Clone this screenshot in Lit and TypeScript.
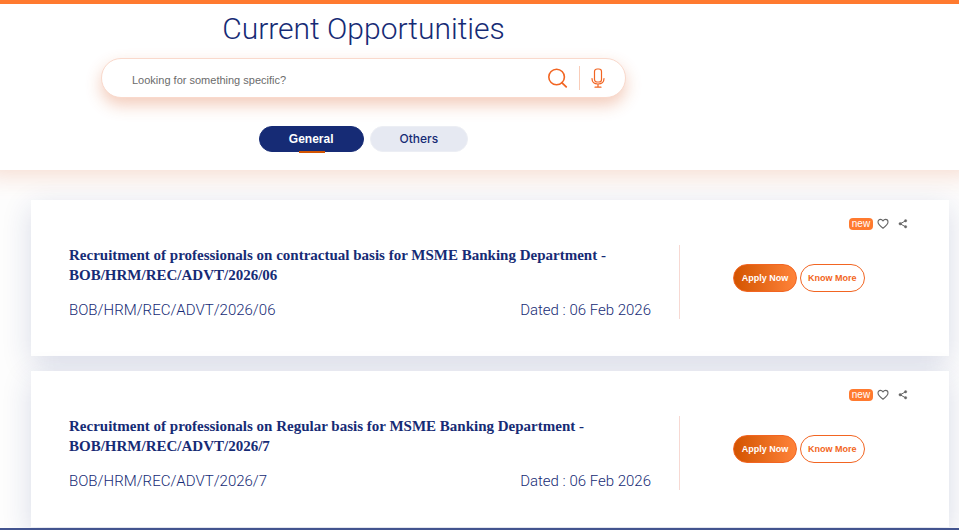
import { LitElement, html, css } from "lit";
import { customElement, property, state } from "lit/decorators.js";
import { classMap } from "lit/directives/class-map.js";

interface Opening {
  title: string;
  ref: string;
  dated: string;
}

const OPENINGS: Opening[] = [
  {
    title: "Recruitment of professionals on contractual basis for MSME Banking Department - BOB/HRM/REC/ADVT/2026/06",
    ref: "BOB/HRM/REC/ADVT/2026/06",
    dated: "06 Feb 2026",
  },
  {
    title: "Recruitment of professionals on Regular basis for MSME Banking Department - BOB/HRM/REC/ADVT/2026/7",
    ref: "BOB/HRM/REC/ADVT/2026/7",
    dated: "06 Feb 2026",
  },
];

@customElement("opening-card")
export class OpeningCard extends LitElement {
  @property({ attribute: false }) opening!: Opening;

  static styles = css`
    :host {
      display: block;
      background: #fff;
      box-shadow: 0 8px 28px rgba(22, 43, 117, 0.16);
      font-family: "Liberation Sans", Arial, sans-serif;
      color: #162b75;
    }
    .tools {
      display: flex;
      justify-content: flex-end;
      align-items: center;
      height: 12px;
      padding: 18px 41px 15px 0;
    }
    .badge {
      width: 24px;
      height: 12px;
      margin-right: 4px;
      border-radius: 4px;
      background: #ff7a2f;
      color: #fff;
      font-size: 10px;
      line-height: 12px;
      text-align: center;
    }
    .icon {
      display: flex;
      padding: 0;
      border: 0;
      background: none;
      color: #666;
      cursor: pointer;
    }
    .icon + .icon {
      margin-left: 9px;
    }
    .body {
      display: grid;
      grid-template-columns: minmax(0, 1fr) 269px;
      padding-bottom: 37px;
    }
    .info {
      padding: 0 28px 0 38px;
      border-right: 1px solid #f7d9d3;
    }
    .title {
      margin: 0 0 16px;
      font: bold 15px/20px "Liberation Serif", "Times New Roman", serif;
    }
    .meta {
      display: flex;
      justify-content: space-between;
      font: 300 15px/18px Roboto, "Liberation Sans", sans-serif;
    }
    .actions {
      display: flex;
      gap: 3px;
      align-items: flex-start;
      padding: 19px 0 0 53px;
    }
    .action {
      box-sizing: border-box;
      min-width: 64px;
      height: 28px;
      padding: 0 7px;
      border: 1px solid #f26522;
      border-radius: 14px;
      background: #fff;
      color: #f26522;
      font: bold 9px/26px "Liberation Sans", Arial, sans-serif;
      text-align: center;
      text-decoration: none;
      white-space: nowrap;
    }
    .primary {
      background: linear-gradient(90deg, #d35400, #ff833a);
      color: #fff;
    }
  `;

  render() {
    const o = this.opening;
    return html`
      <div class="tools">
        <span class="badge">new</span>
        <button class="icon" aria-label="Save">
          <svg width="12" height="12" viewBox="0 0 12 12" fill="none" stroke="currentColor" stroke-width="1.1" stroke-linejoin="round">
            <path d="M6 10.2C3.6 8.4 1 6.4 1 4C1 2.4 2.1 1.4 3.4 1.4C4.6 1.4 5.5 2.1 6 3C6.5 2.1 7.4 1.4 8.6 1.4C9.9 1.4 11 2.4 11 4C11 6.4 8.4 8.4 6 10.2Z" />
          </svg>
        </button>
        <button class="icon" aria-label="Share">
          <svg width="10" height="10" viewBox="0 0 10 10" fill="currentColor" stroke="currentColor">
            <path d="M7.6 1.8L2.2 4.8L7.6 7.8" fill="none" stroke-width="1" />
            <circle cx="7.6" cy="1.8" r="1.2" stroke-width=".4" />
            <circle cx="2.2" cy="4.8" r="1.3" stroke-width=".4" />
            <circle cx="7.6" cy="7.8" r="1.2" stroke-width=".4" />
          </svg>
        </button>
      </div>
      <div class="body">
        <div class="info">
          <h2 class="title">${o.title}</h2>
          <div class="meta"><span>${o.ref}</span><span>Dated : ${o.dated}</span></div>
        </div>
        <div class="actions">
          <a class="action primary" href="#apply">Apply Now</a>
          <a class="action" href="#more">Know More</a>
        </div>
      </div>
    `;
  }
}

@customElement("app-root")
export class AppRoot extends LitElement {
  @state() private tab = "General";

  static styles = css`
    :host {
      display: block;
      background: #fdfdfd;
      font-family: "Liberation Sans", Arial, sans-serif;
      color: #162b75;
    }
    .header {
      display: flex;
      flex-direction: column;
      align-items: center;
      padding: 7px 232px 18px 0;
      border-top: 4px solid #ff7a2f;
      background: #fff;
      box-shadow: 0 -12px 24px 16px rgba(225, 90, 30, 0.22);
    }
    .heading {
      margin: 0 0 11px;
      font: 300 30px/36px Roboto, "Liberation Sans", sans-serif;
    }
    .search {
      box-sizing: border-box;
      display: flex;
      align-items: center;
      width: 525px;
      max-width: 90%;
      height: 40px;
      margin-bottom: 28px;
      padding: 0 20px 0 30px;
      border: 1px solid #f9d9cc;
      border-radius: 20px;
      background: #fff;
      box-shadow: 0 7px 16px rgba(215, 85, 30, 0.3);
    }
    .query {
      flex: 1;
      min-width: 0;
      height: 20px;
      padding: 4px 0 0;
      border: 0;
      outline: 0;
      background: none;
      color: #162b75;
      font: 11px/16px "Liberation Sans", Arial, sans-serif;
    }
    .query::placeholder {
      color: #6b6b6b;
      opacity: 1;
    }
    .tool {
      display: flex;
      padding: 0;
      border: 0;
      background: none;
      color: #f26522;
      cursor: pointer;
    }
    .rule {
      width: 1px;
      height: 24px;
      margin: 0 11px;
      background: #f9cdb9;
    }
    .tabs {
      display: flex;
      gap: 6px;
    }
    .tab {
      position: relative;
      box-sizing: border-box;
      height: 26px;
      padding: 0 29px;
      border: 1px solid #eceef4;
      border-radius: 13px;
      background: #e6e9f2;
      color: #162b75;
      font: 500 12px/24px Inter, "Liberation Sans", sans-serif;
      cursor: pointer;
    }
    .active {
      border-color: #162b75;
      background: #162b75;
      color: #fff;
      font: bold 12px/24px "Liberation Sans", Arial, sans-serif;
    }
    .active::after {
      content: "";
      position: absolute;
      left: 38%;
      bottom: -2px;
      width: 26px;
      height: 2px;
      background: #d35400;
    }
    .list {
      display: grid;
      gap: 15px;
      padding: 30px 10px 1px 31px;
    }
    .footer {
      position: relative;
      height: 2px;
      background: #43548f;
    }
    .clip {
      overflow: hidden;
    }
  `;

  render() {
    return html`
      <div class="clip">
        <header class="header">
          <h1 class="heading">Current Opportunities</h1>
          <div class="search">
            <input class="query" type="text" aria-label="Search openings" placeholder="Looking for something specific?" />
            <button class="tool" aria-label="Search">
              <svg width="20" height="20" viewBox="0 0 20 20" fill="none" stroke="currentColor" stroke-width="1.6" stroke-linecap="round">
                <circle cx="8.6" cy="9" r="7.8" />
                <path d="M13.8 14.6L18.2 18.8" stroke-width="1.8" />
              </svg>
            </button>
            <span class="rule"></span>
            <button class="tool" aria-label="Voice search">
              <svg width="14" height="20" viewBox="0 0 14 20" fill="none" stroke="currentColor" stroke-width="1.2" stroke-linecap="round">
                <rect x="3.5" y="1" width="7" height="13" rx="2.6" />
                <path d="M1 10.5C1 14 3.6 16 7 16S13 14 13 10.5M7 16V19M4 19.2H10" />
              </svg>
            </button>
          </div>
          <div class="tabs">
            ${["General", "Others"].map(
              (name) => html`<button
                class=${classMap({ tab: true, active: this.tab === name })}
                @click=${() => (this.tab = name)}
              >${name}</button>`
            )}
          </div>
        </header>
        <main class="list">
          ${OPENINGS.map((o) => html`<opening-card .opening=${o}></opening-card>`)}
        </main>
        <footer class="footer"></footer>
      </div>
    `;
  }
}
